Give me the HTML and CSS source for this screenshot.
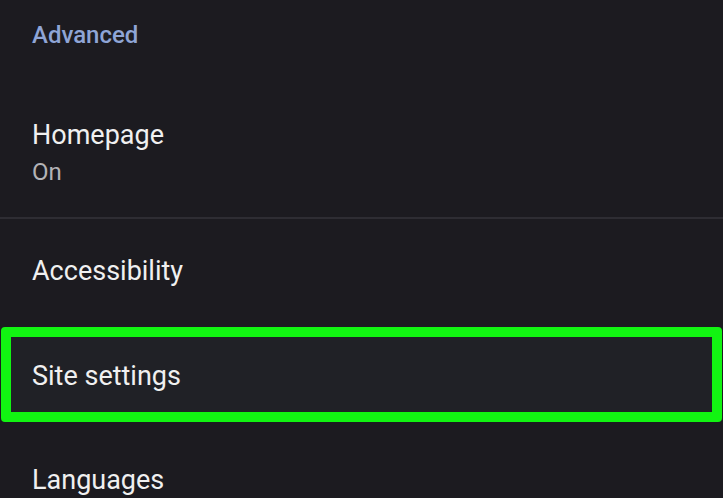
FILE: index.html
```html
<!DOCTYPE html>
<html>
<head>
<meta charset="utf-8">
<link rel="stylesheet" href="styles.css">
</head>
<body>
<div class="screen">
  <div class="section-title">Advanced</div>
  <div class="row row-home">
    <div class="title">Homepage</div>
    <div class="sub">On</div>
  </div>
  <div class="divider"></div>
  <div class="row row-access">
    <div class="title">Accessibility</div>
  </div>
  <div class="highlight">
    <div class="title">Site settings</div>
  </div>
  <div class="row row-lang">
    <div class="title">Languages</div>
  </div>
</div>
</body>
</html>
```
FILE: styles.css
```css
html, body {
  margin: 0;
  padding: 0;
  background: #1c1b20;
}
body {
  font-family: Roboto, "Liberation Sans", sans-serif;
  width: 723px;
  height: 498px;
  overflow: hidden;
}
.screen {
  display: flex;
  flex-direction: column;
}
.section-title {
  padding: 21px 0 0 32px;
  font-size: 24px;
  line-height: 28px;
  font-weight: 500;
  color: #8fa5d6;
  height: 28px;
}
.row {
  padding-left: 32px;
}
.title {
  font-size: 27px;
  line-height: 32px;
  color: #f0f0f0;
}
.sub {
  margin-top: 7px;
  font-size: 24px;
  line-height: 28px;
  color: #b3b3b6;
}
.row-home {
  padding-top: 70px;
  padding-bottom: 31px;
}
.divider {
  height: 2px;
  background: #2e2d33;
}
.row-access {
  padding-top: 36px;
  padding-bottom: 38px;
}
.highlight {
  margin: 2px 1px 1px 1px;
  border: 10px solid #12f412;
  border-radius: 4px;
  background: #202126;
  padding: 23px 0 20px 21px;
}
.row-lang {
  padding-top: 41px;
}
```
